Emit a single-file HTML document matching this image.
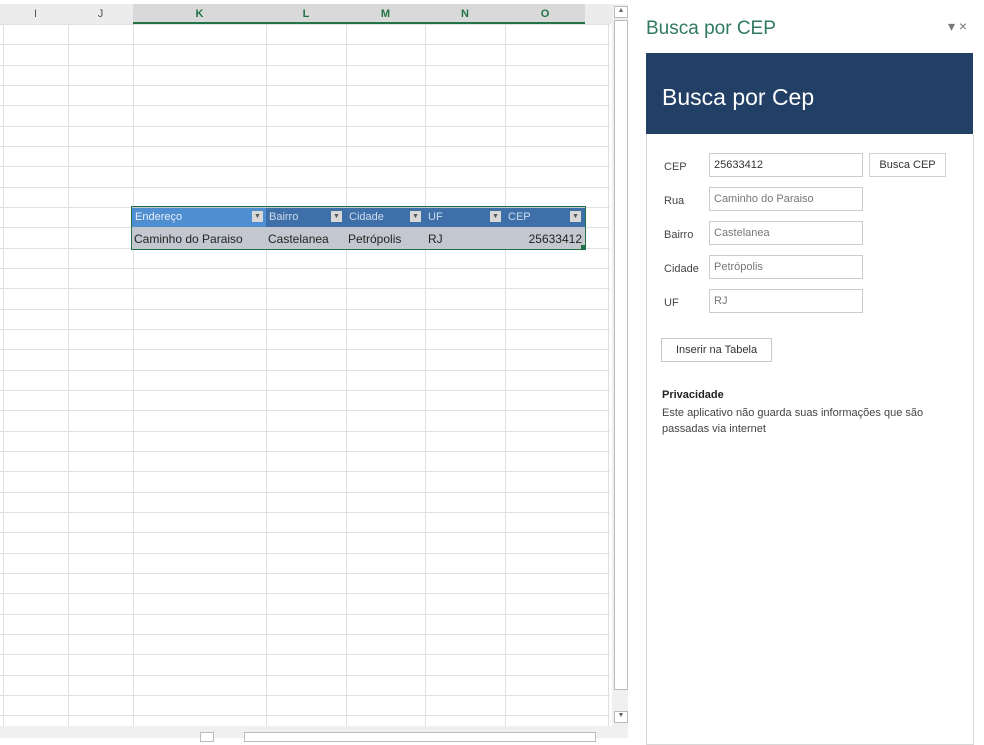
<!DOCTYPE html>
<html><head><meta charset="utf-8"><style>
body{margin:0;width:984px;height:738px;overflow:hidden;background:#fff;font-family:"Liberation Sans",sans-serif;position:relative}
.a{position:absolute}
.hl{position:absolute;left:0;width:610px;height:1px;background:#e0e0e0}
.vl{position:absolute;top:24px;width:1px;height:702px;background:#e0e0e0}
.ch{position:absolute;top:4px;height:20px;font-size:11px;text-align:center;line-height:20px;color:#555}
.inp{position:absolute;left:709px;width:154px;height:24px;border:1px solid #ccc;font-size:11px;line-height:22px;padding-left:4px;box-sizing:border-box;color:#777}
.lbl{position:absolute;left:664px;font-size:11px;color:#444}
.th{position:absolute;top:208px;height:19px;font-size:11px;line-height:19px;color:#cfdcec;padding-left:3px;box-sizing:border-box}
.dd{position:absolute;top:211px;width:11px;height:11px;background:#d8d8d8;font-size:7px;line-height:11px;text-align:center;color:#555}
</style></head><body>
<div class="a" style="left:0;top:4px;width:612px;height:20px;background:#ececec"></div>
<div class="a" style="left:133px;top:4px;width:452px;height:20px;background:#d9d9d9"></div>
<div class="a" style="left:133px;top:22px;width:452px;height:2px;background:#217346"></div>
<div class="ch" style="left:3px;width:65px">I</div>
<div class="ch" style="left:68px;width:65px">J</div>
<div class="ch" style="left:133px;width:133px;color:#217346;font-weight:bold">K</div>
<div class="ch" style="left:266px;width:80px;color:#217346;font-weight:bold">L</div>
<div class="ch" style="left:346px;width:79px;color:#217346;font-weight:bold">M</div>
<div class="ch" style="left:425px;width:80px;color:#217346;font-weight:bold">N</div>
<div class="ch" style="left:505px;width:80px;color:#217346;font-weight:bold">O</div>
<div id="g"></div>
<script>
var g=document.getElementById('g'),h='';
for(var i=0;i<35;i++){var y=Math.round(24+i*20.33);if(y<725)h+='<div class="hl" style="top:'+y+'px"></div>';}
[3,68,133,266,346,425,505,608].forEach(function(x){h+='<div class="vl" style="left:'+x+'px"></div>'});
g.innerHTML=h;
</script>
<div class="a" style="left:131px;top:206px;width:453px;height:42px;border:1px solid #217346;background:#c3c8d0"></div>
<div class="th" style="left:132px;width:134px;background:#4f8ed0;color:#e8f0fa">Endereço</div>
<div class="th" style="left:266px;width:80px;background:#3e6fa8">Bairro</div>
<div class="th" style="left:346px;width:79px;background:#3e6fa8">Cidade</div>
<div class="th" style="left:425px;width:80px;background:#3e6fa8">UF</div>
<div class="th" style="left:505px;width:80px;background:#3e6fa8">CEP</div>
<div class="dd" style="left:252px">▼</div><div class="dd" style="left:331px">▼</div><div class="dd" style="left:410px">▼</div><div class="dd" style="left:490px">▼</div><div class="dd" style="left:570px">▼</div>
<div class="a" style="left:134px;top:232px;font-size:12px;color:#222;width:450px">
<span class="a" style="left:0">Caminho do Paraiso</span><span class="a" style="left:134px">Castelanea</span><span class="a" style="left:214px">Petrópolis</span><span class="a" style="left:294px">RJ</span><span class="a" style="right:2px">25633412</span></div>
<div class="a" style="left:581px;top:245px;width:5px;height:5px;background:#217346"></div>
<div class="a" style="left:612px;top:4px;width:16px;height:722px;background:#f0f0f0"></div>
<div class="a" style="left:614px;top:6px;width:12px;height:10px;border:1px solid #bbb;background:#fff;font-size:7px;text-align:center;color:#666">▲</div>
<div class="a" style="left:614px;top:20px;width:12px;height:668px;border:1px solid #bbb;background:#fff"></div>
<div class="a" style="left:614px;top:711px;width:12px;height:10px;border:1px solid #bbb;background:#fff;font-size:7px;text-align:center;color:#666">▼</div>
<div class="a" style="left:0;top:726px;width:628px;height:12px;background:#f0f0f0"></div>
<div class="a" style="left:200px;top:732px;width:12px;height:8px;border:1px solid #bbb;background:#fff"></div>
<div class="a" style="left:244px;top:732px;width:350px;height:8px;border:1px solid #bbb;background:#fff"></div>
<div class="a" style="left:646px;top:18px;font-size:19px;color:#2f7a5e">Busca por CEP</div>
<div class="a" style="left:948px;top:18px;font-size:14px;color:#777">▾ ×</div>
<div class="a" style="left:646px;top:53px;width:327px;height:81px;background:#223f66"></div>
<div class="a" style="left:662px;top:84px;font-size:23px;color:#fff">Busca por Cep</div>
<div class="a" style="left:646px;top:134px;width:326px;height:610px;border:1px solid #d8d8d8;border-top:none"></div>
<div class="lbl" style="top:161px">CEP</div>
<div class="lbl" style="top:195px">Rua</div>
<div class="lbl" style="top:229px">Bairro</div>
<div class="lbl" style="top:263px">Cidade</div>
<div class="lbl" style="top:297px">UF</div>
<div class="inp" style="top:153px;color:#333">25633412</div>
<div class="inp" style="top:187px">Caminho do Paraiso</div>
<div class="inp" style="top:221px">Castelanea</div>
<div class="inp" style="top:255px">Petrópolis</div>
<div class="inp" style="top:289px">RJ</div>
<div class="a" style="left:869px;top:153px;width:77px;height:24px;border:1px solid #d0d0d0;box-sizing:border-box;font-size:11px;line-height:22px;text-align:center;color:#333">Busca CEP</div>
<div class="a" style="left:661px;top:338px;width:111px;height:24px;border:1px solid #c8c8c8;box-sizing:border-box;font-size:11px;line-height:22px;text-align:center;color:#333">Inserir na Tabela</div>
<div class="a" style="left:662px;top:389px;font-size:11px;font-weight:bold;color:#222">Privacidade</div>
<div class="a" style="left:662px;top:405px;width:300px;font-size:11px;line-height:16px;color:#444">Este aplicativo não guarda suas informações que são passadas via internet</div>
</body></html>
